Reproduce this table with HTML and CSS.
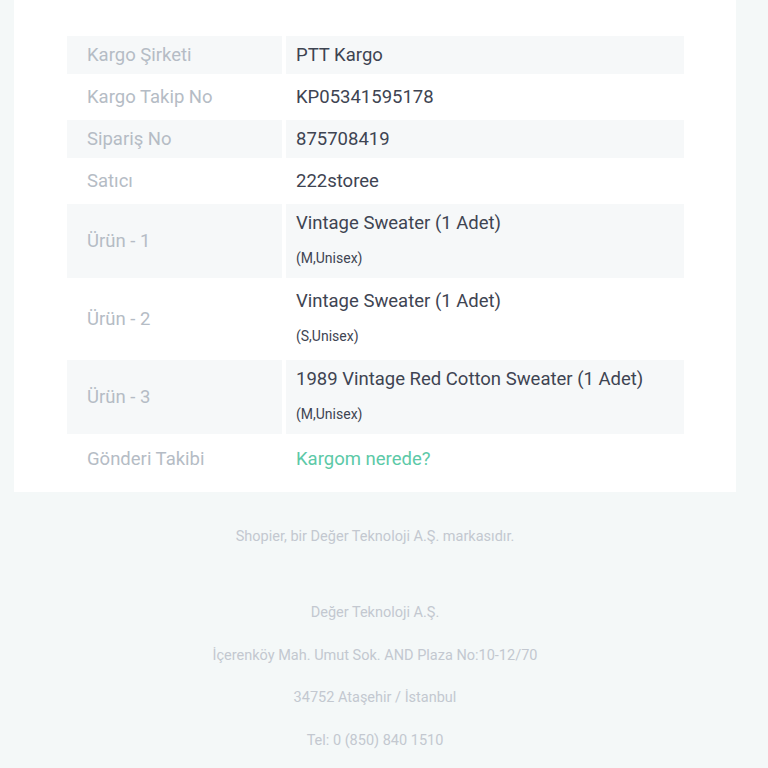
FILE: index.html
```html
<!DOCTYPE html>
<html lang="tr">
<head>
    <meta charset="UTF-8">
    <meta name="viewport" content="width=device-width, initial-scale=1.0">
    <title>Sipariş Detayı</title>
    <link rel="stylesheet" href="styles.css">
</head>
<body>
    <div class="card">
        <div class="details">
            <div class="row striped">
                <div class="label">Kargo Şirketi</div>
                <div class="value">PTT Kargo</div>
            </div>
            <div class="row">
                <div class="label">Kargo Takip No</div>
                <div class="value">KP05341595178</div>
            </div>
            <div class="row striped">
                <div class="label">Sipariş No</div>
                <div class="value">875708419</div>
            </div>
            <div class="row">
                <div class="label">Satıcı</div>
                <div class="value">222storee</div>
            </div>
            <div class="row striped">
                <div class="label">Ürün - 1</div>
                <div class="value product">
                    Vintage Sweater (1 Adet)
                    <span class="variant">(M,Unisex)</span>
                </div>
            </div>
            <div class="row">
                <div class="label">Ürün - 2</div>
                <div class="value product">
                    Vintage Sweater (1 Adet)
                    <span class="variant">(S,Unisex)</span>
                </div>
            </div>
            <div class="row striped">
                <div class="label">Ürün - 3</div>
                <div class="value product">
                    1989 Vintage Red Cotton Sweater (1 Adet)
                    <span class="variant">(M,Unisex)</span>
                </div>
            </div>
            <div class="row tracking">
                <div class="label">Gönderi Takibi</div>
                <div class="value"><a class="track-link" href="#">Kargom nerede?</a></div>
            </div>
        </div>
    </div>

    <div class="footer">
        <p class="brand">Shopier, bir Değer Teknoloji A.Ş. markasıdır.</p>
        <p>Değer Teknoloji A.Ş.</p>
        <p>İçerenköy Mah. Umut Sok. AND Plaza No:10-12/70</p>
        <p>34752 Ataşehir / İstanbul</p>
        <p>Tel: 0 (850) 840 1510</p>
    </div>
</body>
</html>
```

FILE: styles.css
```css
* {
    margin: 0;
    padding: 0;
    box-sizing: border-box;
}

body {
    font-family: Roboto, 'Liberation Sans', sans-serif;
    background: #f4f8f8;
    color: #3e4452;
}

.card {
    background: #ffffff;
    width: 722px;
    margin-left: 14px;
    padding: 36px 52px 12px 53px;
}

.details {
    display: flex;
    flex-direction: column;
    gap: 4px;
}

.row {
    display: grid;
    grid-template-columns: 215px 1fr;
    gap: 4px;
}

.row.striped .label,
.row.striped .value {
    background: #f6f8f9;
}

.label {
    display: flex;
    align-items: center;
    padding: 8px 20px;
    font-size: 18.5px;
    line-height: 22px;
    color: #b5bcc5;
}

.value {
    padding: 8px 10px;
    font-size: 18.5px;
    line-height: 22px;
    color: #3e4452;
}

.value.product {
    padding-bottom: 11px;
}

.row.tracking .label,
.row.tracking .value {
    padding-top: 10px;
    padding-bottom: 10px;
}

.variant {
    display: block;
    margin-top: 15px;
    font-size: 14px;
    line-height: 18px;
}

.track-link {
    color: #5cc9a7;
    text-decoration: none;
}

.footer {
    width: 722px;
    margin-left: 14px;
    text-align: center;
    font-size: 14.5px;
    line-height: 18px;
    color: #c3c8d0;
    padding-top: 36px;
}

.footer p {
    margin-bottom: 24.5px;
}

.footer .brand {
    margin-bottom: 58px;
}
```
